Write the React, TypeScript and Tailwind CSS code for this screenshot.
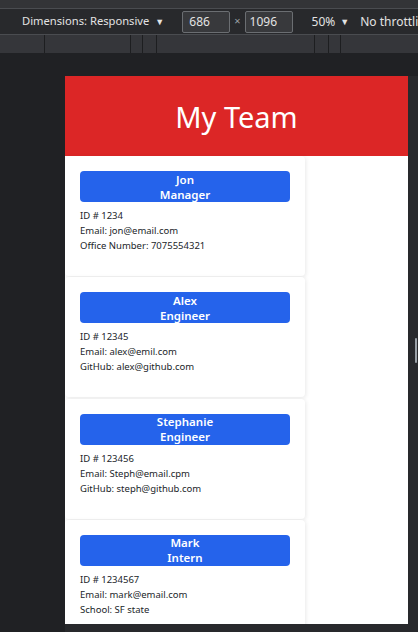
import React from 'react';

type Member = { name: string; role: string; id: string; email: string; extra: string };

const team: Member[] = [
  { name: 'Jon', role: 'Manager', id: '1234', email: 'jon@email.com', extra: 'Office Number: 7075554321' },
  { name: 'Alex', role: 'Engineer', id: '12345', email: 'alex@emil.com', extra: 'GitHub: alex@github.com' },
  { name: 'Stephanie', role: 'Engineer', id: '123456', email: 'Steph@email.cpm', extra: 'GitHub: steph@github.com' },
  { name: 'Mark', role: 'Intern', id: '1234567', email: 'mark@email.com', extra: 'School: SF state' },
];

function Card({ m }: { m: Member }) {
  return (
    <div className="shrink-0 w-[240px] h-[120px] bg-white rounded-[4px] shadow-[1px_1px_4px_rgba(0,0,0,0.09)] px-[15px] pt-[15px] mb-[1.3px]">
      <div className="h-[31px] bg-[#2563eb] rounded-[4px] flex items-center justify-center text-center text-white font-semibold text-[11.5px] leading-[15px]">
        <span>
          {m.name}
          <br />
          {m.role}
        </span>
      </div>
      <div className="mt-[6px] text-[9.5px] leading-[15px] text-[#212529]">
        <p>ID # {m.id}</p>
        <p>Email: {m.email}</p>
        <p>{m.extra}</p>
      </div>
    </div>
  );
}

export default function App() {
  return (
    <div className="w-[418px] h-[632px] bg-[#202124] overflow-hidden flex flex-col font-['Segoe_UI','Noto_Sans',sans-serif]">
      {/* devtools device toolbar */}
      <div className="shrink-0 h-[9px] bg-[#333437] border-b border-[#4a4c50]" />
      <div className="shrink-0 h-[26px] bg-[#28292c] border-b border-[#4a4c50] flex items-center text-[11.2px] text-[#e3e3e3] whitespace-nowrap overflow-hidden">
        <span className="shrink-0 ml-[22px]">Dimensions: Responsive</span>
        <span className="shrink-0 ml-[6px] text-[9px]">▼</span>
        <div className="shrink-0 ml-[18px] w-[48px] h-[22px] bg-[#38393c] border border-[#6b6e72] rounded-[2px] px-[6px] flex items-center text-[12px]">686</div>
        <span className="shrink-0 mx-[4px] text-[#9aa0a6] text-[11px]">×</span>
        <div className="shrink-0 w-[48px] h-[22px] bg-[#38393c] border border-[#6b6e72] rounded-[2px] px-[4px] flex items-center text-[12px]">1096</div>
        <span className="shrink-0 ml-[19px] text-[12px]">50%</span>
        <span className="shrink-0 ml-[5px] text-[9px]">▼</span>
        <span className="shrink-0 ml-[11px] text-[12px]">No throttling</span>
      </div>
      <div className="shrink-0 h-[18px] bg-[#35363a] flex">
        <div className="w-[45px] border-r border-[#1d1e20]" />
        <div className="w-[86px] border-r border-[#1d1e20]" />
        <div className="w-[12px] border-r border-[#1d1e20]" />
        <div className="w-[14px] border-r border-[#1d1e20]" />
        <div className="w-[158px] border-r border-[#1d1e20]" />
        <div className="w-[14px] border-r border-[#1d1e20]" />
        <div className="w-[12px] border-r border-[#1d1e20]" />
      </div>

      {/* viewport */}
      <div className="flex-1 flex pt-[23px]">
        <div className="w-[65px]" />
        <div className="flex flex-col">
          <div className="flex">
            <div className="w-[343px] h-[548px] bg-white flex flex-col overflow-hidden">
              <header className="shrink-0 h-[80px] bg-[#dc2626] flex items-center justify-center text-white text-[29px] pt-[2px]">
                My Team
              </header>
              <div className="flex flex-col">
                {team.map((m) => (
                  <Card key={m.name} m={m} />
                ))}
              </div>
            </div>
            <div className="w-[10px] bg-[#28292c] flex justify-end pr-[1px] pt-[262px]">
              <div className="w-[2px] h-[25px] bg-[#9aa0a6] rounded-[1px]" />
            </div>
          </div>
          <div className="h-[8px] bg-[#28292c]" />
        </div>
      </div>
    </div>
  );
}
